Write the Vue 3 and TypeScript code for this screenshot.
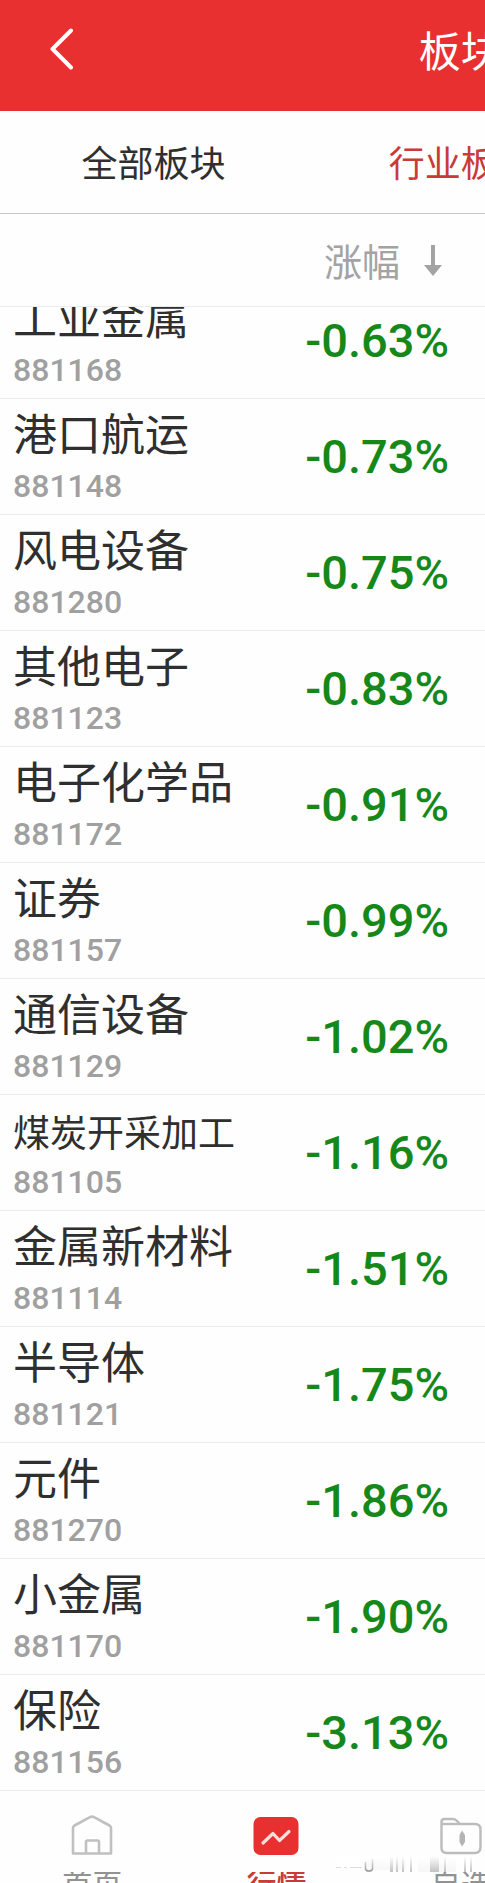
<script setup lang="ts">
interface Sector {
  name: string
  code: string
  change: string
}

const sectors: Sector[] = [
  { name: '工业金属', code: '881168', change: '-0.63%' },
  { name: '港口航运', code: '881148', change: '-0.73%' },
  { name: '风电设备', code: '881280', change: '-0.75%' },
  { name: '其他电子', code: '881123', change: '-0.83%' },
  { name: '电子化学品', code: '881172', change: '-0.91%' },
  { name: '证券', code: '881157', change: '-0.99%' },
  { name: '通信设备', code: '881129', change: '-1.02%' },
  { name: '煤炭开采加工', code: '881105', change: '-1.16%' },
  { name: '金属新材料', code: '881114', change: '-1.51%' },
  { name: '半导体', code: '881121', change: '-1.75%' },
  { name: '元件', code: '881270', change: '-1.86%' },
  { name: '小金属', code: '881170', change: '-1.90%' },
  { name: '保险', code: '881156', change: '-3.13%' },
]

const tabs = ['全部板块', '行业板块']
const activeTab = '行业板块'

const isLong = (name: string): boolean => name.length > 5
</script>

<template>
  <div class="page">
    <header class="bar wide">
      <button class="back" type="button" aria-label="返回">
        <svg width="24" height="42" viewBox="0 0 24 42" fill="none" stroke="#fff" stroke-width="4" stroke-linecap="round" stroke-linejoin="round">
          <path d="M21 2.500 2.500 21 21 39.500" />
        </svg>
      </button>
      <h1 class="title">板块</h1>
    </header>

    <nav class="tabs wide">
      <button
        v-for="tab in tabs"
        :key="tab"
        type="button"
        class="tab"
        :class="{ active: tab === activeTab }"
      >{{ tab }}</button>
    </nav>

    <table class="list">
      <thead>
        <tr class="head">
          <th class="sort" scope="col">
            <button type="button" class="sort-button">
              涨幅
              <svg width="18" height="36" viewBox="0 0 18 36" fill="#a3a3a3">
                <path d="M7 4h4v20h7L9 35 0 24h7z" />
              </svg>
            </button>
          </th>
        </tr>
      </thead>
      <tbody>
        <tr v-for="s in sectors" :key="s.code" class="row">
          <td class="sector">
            <div class="name"><span :class="{ small: isLong(s.name) }">{{ s.name }}</span></div>
            <div class="code">{{ s.code }}</div>
          </td>
          <td class="change">{{ s.change }}</td>
        </tr>
      </tbody>
    </table>

    <footer class="dock">
      <nav class="menu wide">
        <a class="item" href="#home">
          <svg width="42" height="40" viewBox="0 0 42 40" fill="none" stroke="#c0c0c0" stroke-width="2.6" stroke-linejoin="round">
            <path d="M2 38.500V13Q2 11.500 3.500 10.500L19 2.200Q21 1 23 2.200L38.500 10.500Q40 11.500 40 13V38.500Z" />
            <path d="M15 38V27Q15 25.500 16.500 25.500H26.500Q28 25.500 28 27V38" />
          </svg>
          <span class="label">首页</span>
        </a>
        <a class="item current" href="#market">
          <svg width="46" height="40" viewBox="0 0 46 40" fill="none">
            <rect x="0.500" y="2" width="45" height="38" rx="7" fill="#e93030" />
            <path d="M10 28 20 18.500 26.500 25.500 36 16.500" stroke="#fbdcdc" stroke-width="3.200" stroke-linecap="round" stroke-linejoin="round" />
          </svg>
          <span class="label">行情</span>
        </a>
        <a class="item" href="#watchlist">
          <svg width="42" height="40" viewBox="0 0 42 40" fill="none" stroke="#bcbcbc" stroke-width="2.400" stroke-linejoin="round">
            <path d="M1.500 33V7Q1.500 4 4.500 4H13Q15 4 16.500 5.500L20 9H35Q40.500 9 40.500 14.500V32Q40.500 38 35 38H6.500Q1.500 38 1.500 33Z" />
            <path d="M2 9H20" />
            <path d="M22 15.500 25 20V27L22 31.500 19.500 27V20Z" fill="#b4b4b4" stroke="none" />
          </svg>
          <span class="label">自选</span>
        </a>
      </nav>
      <svg class="streaks" width="140" height="16" viewBox="0 0 140 16" aria-hidden="true">
        <defs>
          <linearGradient id="fade" x1="0" y1="0" x2="0" y2="1">
            <stop offset="0" stop-color="#fff" stop-opacity="1" />
            <stop offset="1" stop-color="#fff" stop-opacity="0.200" />
          </linearGradient>
        </defs>
        <path d="M28 2h42v12H28zM82 2h38v14H82z" fill="#f4f4f4" />
        <path d="M54 0h3v16h-3zM60 0h2v16h-2zM66 0h2v16h-2zM74 0h2v16h-2zM94 0h9v16h-9zM108 0h2v16h-2zM128 0h2v16h-2zM134 0h2v16h-2z" fill="#b4b4b4" />
        <path d="M29.500 6v7Q30 15 33 15T36.500 13V3" fill="none" stroke="#777" stroke-width="1.500" />
        <path d="M0 11.500h5M8 11.500h3M14 11.500h12" stroke="#c4c4c4" stroke-width="1" />
        <rect width="140" height="16" fill="url(#fade)" />
      </svg>
    </footer>
  </div>
</template>

<style>
html,
body {
  margin: 0;
  background: #fff;
  overflow-x: hidden;
}
</style>

<style scoped>
.page {
  overflow: hidden;
  background: #fefefe;
  color: #2f2f2f;
  font-family: "Noto Sans CJK SC", "Noto Sans", sans-serif;
}

button {
  border: 0;
  padding: 0;
  background: none;
  color: inherit;
  font: inherit;
}

/* The toolbars are broader than the viewport and run off its right edge */
.wide {
  width: 190%;
  box-sizing: border-box;
}

.bar {
  display: grid;
  grid-template-columns: 1fr auto 1fr;
  align-items: center;
  height: 111px;
  padding-bottom: 14px;
  box-sizing: border-box;
  background: #e83030;
  color: #fff;
}

.back {
  justify-self: start;
  display: flex;
  margin-left: 50px;
}

.title {
  margin: 0;
  font-size: 42px;
  font-weight: 400;
  line-height: 60px;
}

.tabs {
  display: grid;
  grid-template-columns: repeat(3, 1fr);
  height: 103px;
  border-bottom: 1px solid #c6c6c6;
}

.tab {
  padding-bottom: 2px;
  font-size: 36px;
}

.tab.active {
  color: #c93a38;
}

.list {
  display: block;
}

thead,
tbody {
  display: block;
}

tbody {
  overflow: hidden;
}

.head {
  display: flex;
  justify-content: flex-end;
  height: 92px;
  padding-right: 43px;
  border-bottom: 1px solid #ececec;
}

.sort {
  display: flex;
  padding: 0 0 2px;
  font-weight: 400;
}

.sort-button {
  display: flex;
  align-items: center;
  gap: 24px;
  color: #a3a3a3;
  font-size: 38px;
}

.row {
  display: flex;
  align-items: center;
  justify-content: space-between;
  padding: 0 36px 0 13px;
  border-bottom: 1px solid #ececec;
}

/* The list rests slightly scrolled, its first row tucked under the heading */
.row:first-child {
  margin-top: -24px;
}

.sector {
  padding: 3px 0;
}

.name {
  font-size: 44px;
  line-height: 60px;
  white-space: nowrap;
}

.small {
  font-size: 37px;
  line-height: 1;
}

.code {
  color: #a0a0a0;
  font-family: Roboto, sans-serif;
  font-size: 32px;
  font-weight: 500;
  line-height: 49px;
}

.change {
  padding: 0;
  color: #16881a;
  font-family: Roboto, sans-serif;
  font-size: 47px;
  font-weight: 500;
  white-space: nowrap;
}

.dock {
  position: relative;
  height: 92px;
  overflow: hidden;
}

.menu {
  display: grid;
  grid-template-columns: repeat(5, 1fr);
  padding-top: 24px;
}

.item {
  display: flex;
  flex-direction: column;
  align-items: center;
  gap: 5px;
  color: #929292;
  font-size: 30px;
  line-height: 44px;
  text-decoration: none;
}

.label {
  clip-path: inset(12px 0 0);
}

.current {
  color: #c93a38;
  font-weight: 500;
}

.streaks {
  position: absolute;
  right: 9px;
  bottom: 11px;
}
</style>
